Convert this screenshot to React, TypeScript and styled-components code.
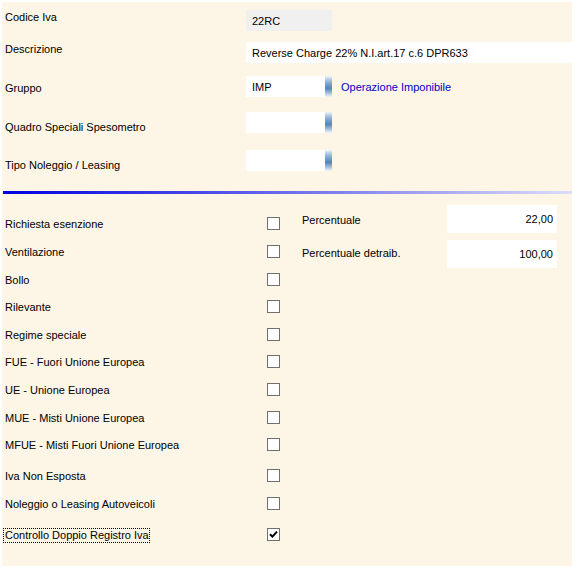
import React from "react";
import styled, { createGlobalStyle } from "styled-components";

const Global = createGlobalStyle`
  html, body { margin: 0; padding: 0; background: #ffffff; }
  body { font-family: "Liberation Sans", Arial, sans-serif; font-size: 11px; color: #000; }
`;

const Panel = styled.div`
  margin: 2px 1px 1px 2px;
  width: 570px;
  height: 564px;
  background: #fdf5e6;
  display: flex;
  flex-direction: column;
  overflow: hidden;
`;

const TopSection = styled.div`
  display: flex;
  flex-direction: column;
  padding-left: 3px;
`;

const FieldRow = styled.div<{ $mt: number }>`
  display: grid;
  grid-template-columns: 241px auto 1fr;
  align-items: start;
  height: 21px;
  margin-top: ${(p) => p.$mt}px;
`;

const Label = styled.div<{ $pt?: number }>`
  line-height: 14px;
  padding-top: ${(p) => p.$pt ?? 0}px;
  white-space: nowrap;
`;

const TextBox = styled.div<{ $w?: number; $disabled?: boolean; $align?: string; $h?: number }>`
  box-sizing: border-box;
  height: ${(p) => p.$h ?? 21}px;
  width: ${(p) => (p.$w ? `${p.$w}px` : "auto")};
  background: ${(p) => (p.$disabled ? "#f0f0f0" : "#ffffff")};
  display: flex;
  align-items: center;
  justify-content: ${(p) => (p.$align === "right" ? "flex-end" : "flex-start")};
  padding: 0 ${(p) => (p.$align === "right" ? "4px" : "0")} 0 ${(p) => (p.$align === "right" ? "0" : "6px")};
  white-space: nowrap;
`;

const WideBox = styled(TextBox)`
  grid-column: 2 / 4;
  margin-right: -3px;
`;

const Combo = styled.div`
  display: flex;
  width: 86px;
  height: 21px;
`;

const ComboText = styled.div`
  flex: 1;
  background: #ffffff;
  display: flex;
  align-items: center;
  padding-left: 6px;
`;

const ComboBar = styled.div`
  width: 7px;
  background: linear-gradient(
    to bottom,
    #eef3f9 0%,
    #a9c3de 20%,
    #6a97c4 45%,
    #5686b8 60%,
    #a8c2dd 82%,
    #f2f6fb 100%
  );
`;

const Desc = styled.div`
  color: #0000c8;
  line-height: 14px;
  padding: 4px 0 0 9px;
  white-space: nowrap;
`;

const Separator = styled.div`
  margin: 20px 0 0 1px;
  height: 3px;
  background: linear-gradient(to right, #0000e0 0%, #4a4ae8 35%, #9a9af0 70%, #dcdcfa 100%);
`;

const BottomSection = styled.div`
  display: flex;
  padding-left: 3px;
`;

const LeftCol = styled.div`
  display: flex;
  flex-direction: column;
  width: 275px;
  padding-top: 22px;
`;

const CheckRow = styled.div<{ $mt: number }>`
  display: grid;
  grid-template-columns: 262px 13px;
  align-items: start;
  height: 15px;
  margin-top: ${(p) => p.$mt}px;
`;

const CheckLabel = styled.div<{ $focus?: boolean }>`
  box-sizing: border-box;
  height: 15px;
  line-height: 15px;
  margin-top: 1px;
  white-space: nowrap;
  justify-self: start;
  margin-left: ${(p) => (p.$focus ? "-2px" : "0")};
  padding: 0 ${(p) => (p.$focus ? "1px" : "0")} 0 ${(p) => (p.$focus ? "2px" : "0")};
  outline: ${(p) => (p.$focus ? "1px dotted #000" : "none")};
  outline-offset: -1px;
`;

const CheckBox = styled.div`
  box-sizing: border-box;
  width: 13px;
  height: 13px;
  margin-top: 1px;
  border: 1px solid #707070;
  background: #ffffff;
  display: flex;
  align-items: center;
  justify-content: center;
`;

const RightCol = styled.div`
  display: flex;
  flex-direction: column;
  margin-left: 22px;
  padding-top: 11px;
  gap: 7px;
`;

const PercRow = styled.div`
  display: grid;
  grid-template-columns: 145px 110px;
  align-items: center;
  height: 28px;
`;

const PercLabel = styled.div<{ $dy: number }>`
  line-height: 14px;
  margin-top: ${(p) => p.$dy}px;
`;

const checks: { label: string; mt: number; checked?: boolean }[] = [
  { label: "Richiesta esenzione", mt: 0 },
  { label: "Ventilazione", mt: 13 },
  { label: "Bollo", mt: 13 },
  { label: "Rilevante", mt: 12 },
  { label: "Regime speciale", mt: 13 },
  { label: "FUE - Fuori Unione Europea", mt: 12 },
  { label: "UE - Unione Europea", mt: 13 },
  { label: "MUE - Misti Unione Europea", mt: 13 },
  { label: "MFUE - Misti Fuori Unione Europea", mt: 12 },
  { label: "Iva Non Esposta", mt: 16 },
  { label: "Noleggio o Leasing Autoveicoli", mt: 13 },
  { label: "Controllo Doppio Registro Iva", mt: 16, checked: true },
];

const Check = () => (
  <svg width="9" height="9" viewBox="0 0 9 9">
    <path d="M1 4.2 L3.4 6.6 L8 1.6" fill="none" stroke="#000" strokeWidth="2" />
  </svg>
);

export default function App() {
  return (
    <>
      <Global />
      <Panel>
        <TopSection>
          <FieldRow $mt={8}>
            <Label>Codice Iva</Label>
            <TextBox $w={86} $disabled>
              22RC
            </TextBox>
          </FieldRow>
          <FieldRow $mt={11}>
            <Label>Descrizione</Label>
            <WideBox>Reverse Charge 22% N.I.art.17 c.6 DPR633</WideBox>
          </FieldRow>
          <FieldRow $mt={13}>
            <Label $pt={5}>Gruppo</Label>
            <Combo>
              <ComboText>IMP</ComboText>
              <ComboBar />
            </Combo>
            <Desc>Operazione Imponibile</Desc>
          </FieldRow>
          <FieldRow $mt={15}>
            <Label $pt={8}>Quadro Speciali Spesometro</Label>
            <Combo>
              <ComboText />
              <ComboBar />
            </Combo>
          </FieldRow>
          <FieldRow $mt={17}>
            <Label $pt={8}>Tipo Noleggio / Leasing</Label>
            <Combo>
              <ComboText />
              <ComboBar />
            </Combo>
          </FieldRow>
        </TopSection>
        <Separator />
        <BottomSection>
          <LeftCol>
            {checks.map((c) => (
              <CheckRow key={c.label} $mt={c.mt}>
                <CheckLabel $focus={c.checked}>{c.label}</CheckLabel>
                <CheckBox>{c.checked && <Check />}</CheckBox>
              </CheckRow>
            ))}
          </LeftCol>
          <RightCol>
            <PercRow>
              <PercLabel $dy={2}>Percentuale</PercLabel>
              <TextBox $h={28} $align="right">
                22,00
              </TextBox>
            </PercRow>
            <PercRow>
              <PercLabel $dy={-2}>Percentuale detraib.</PercLabel>
              <TextBox $h={28} $align="right">
                100,00
              </TextBox>
            </PercRow>
          </RightCol>
        </BottomSection>
      </Panel>
    </>
  );
}
